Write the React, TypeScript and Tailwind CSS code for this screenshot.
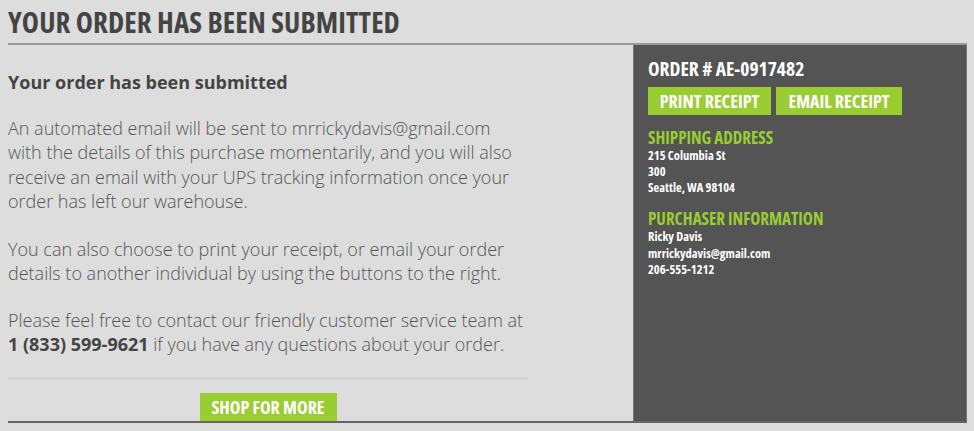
import React from 'react';

const cond = "font-['Open_Sans',sans-serif] font-bold font-stretch-[75%]";

const GreenButton: React.FC<{ label: string; className?: string }> = ({ label, className }) => (
  <button className={`bg-[#9acd32] text-white ${cond} uppercase leading-none ${className ?? ''}`}>
    {label}
  </button>
);

export default function App() {
  return (
    <div className="min-h-[431px] w-[974px] bg-[#dddddd] font-['Open_Sans',sans-serif] text-[#555]">
      <div className="pl-2">
        <h1 className={`${cond} text-[29px] leading-[44px] h-[43px] text-[#444] tracking-[0.1px]`}>
          YOUR ORDER HAS BEEN SUBMITTED
        </h1>
        <div className="flex w-[959px] border-t-2 border-b-2 border-t-[#999] border-b-[#666]">
          {/* left column */}
          <div className="w-[625px] pr-[105px]">
            <h2 className="mt-[25px] text-[18px] font-bold text-[#444] leading-[24px]">
              Your order has been submitted
            </h2>
            <p className="mt-[22px] text-[18px] font-light leading-[24.3px]">
              An automated email will be sent to mrrickydavis@gmail.com with the details of this purchase momentarily, and you will also receive an email with your UPS tracking information once your order has left our warehouse.
            </p>
            <p className="mt-[24px] text-[18px] font-light leading-[24.3px]">
              You can also choose to print your receipt, or email your order details to another individual by using the buttons to the right.
            </p>
            <p className="mt-[22px] text-[18px] font-light leading-[24.3px]">
              Please feel free to contact our friendly customer service team at{' '}
              <span className="font-bold text-[#444]">1 (833) 599-9621</span> if you have any questions about your order.
            </p>
            <div className="mt-[22px] h-px bg-[#c8c8c8]" />
            <div className="flex justify-center pt-[14px]">
              <GreenButton label="Shop for more" className="h-[28px] w-[137px] text-[18px]" />
            </div>
          </div>
          {/* right panel */}
          <div className="flex-1 bg-[#535453] border-x border-[#777] pl-[14px] pt-[13px]">
            <div className={`${cond} text-white text-[19.5px] leading-[22px]`}>ORDER # AE-0917482</div>
            <div className="mt-[7px] flex gap-[5px]">
              <GreenButton label="Print receipt" className="h-[28px] w-[123px] text-[18px]" />
              <GreenButton label="Email receipt" className="h-[28px] w-[126px] text-[18px]" />
            </div>
            <div className={`${cond} mt-[13px] text-[#9acd32] text-[17px] leading-[20px]`}>SHIPPING ADDRESS</div>
            <div className={`${cond} text-white text-[12.5px] leading-[16px]`}>
              <div>215 Columbia St</div>
              <div>300</div>
              <div>Seattle, WA 98104</div>
            </div>
            <div className={`${cond} mt-[13px] text-[#9acd32] text-[17px] leading-[20px]`}>PURCHASER INFORMATION</div>
            <div className={`${cond} text-white text-[12.5px] leading-[16.5px]`}>
              <div>Ricky Davis</div>
              <div>mrrickydavis@gmail.com</div>
              <div>206-555-1212</div>
            </div>
          </div>
        </div>
      </div>
    </div>
  );
}
